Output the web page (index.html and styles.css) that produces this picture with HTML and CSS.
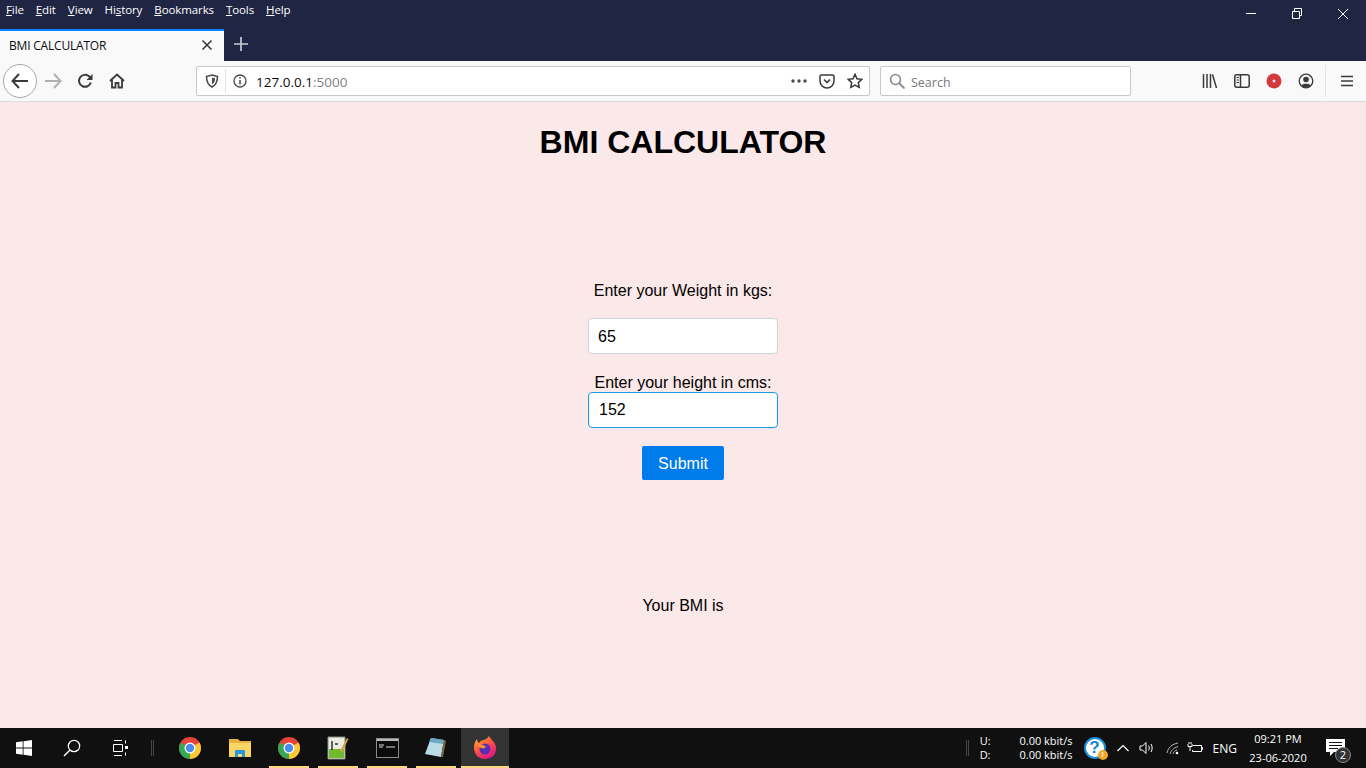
FILE: index.html
```html
<!DOCTYPE html>
<html lang="en">

<head>
    <meta charset="UTF-8">
    <meta name="viewport" content="width=device-width, initial-scale=1.0">
    <title>BMI CALCULATOR</title>
    <link rel="stylesheet" href="styles.css">
</head>

<body>

    <!-- Browser title bar -->
    <div class="titlebar">
        <div class="menubar">
            <div class="menu-items">
                <span><u>F</u>ile</span>
                <span><u>E</u>dit</span>
                <span><u>V</u>iew</span>
                <span>Hi<u>s</u>tory</span>
                <span><u>B</u>ookmarks</span>
                <span><u>T</u>ools</span>
                <span><u>H</u>elp</span>
            </div>
            <div class="window-buttons">
                <svg width="46" height="28" viewBox="0 0 46 28"><path d="M18 13.5h10" stroke="#fff" fill="none"/></svg>
                <svg width="46" height="28" viewBox="0 0 46 28"><path d="M18.5 11.5h7v7h-7zM20.500 11v-2.500h7v7h-2" stroke="#fff" fill="none"/></svg>
                <svg width="46" height="28" viewBox="0 0 46 28"><path d="M18 9l10 10M28 9l-10 10" stroke="#fff" fill="none"/></svg>
            </div>
        </div>
        <div class="tabstrip">
            <div class="tab">
                <span class="tab-title">BMI CALCULATOR</span>
                <svg width="12" height="12" viewBox="0 0 12 12"><path d="M1.500 1.500l9 9M10.500 1.500l-9 9" stroke="#333" stroke-width="1.500" fill="none"/></svg>
            </div>
            <svg class="new-tab" width="14" height="14" viewBox="0 0 14 14"><path d="M7 0v14M0 7h14" stroke="#c9cbd3" stroke-width="1.700" fill="none"/></svg>
        </div>
    </div>

    <!-- Navigation toolbar -->
    <div class="toolbar">
        <div class="back-btn">
            <svg width="18" height="16" viewBox="0 0 18 16"><path d="M8 1L1.500 8 8 15M2 8h15" stroke="#3a3a3c" stroke-width="2" fill="none"/></svg>
        </div>
        <svg class="nav-icon" width="18" height="16" viewBox="0 0 18 16"><path d="M10 1l6.500 7-6.500 7M16 8H1" stroke="#b1b1b3" stroke-width="2" fill="none"/></svg>
        <svg class="nav-icon" width="16" height="16" viewBox="0 0 16 16"><path d="M13.800 9.500A6 6 0 1 1 12 3.300L14 5" stroke="#3a3a3c" stroke-width="2" fill="none"/><path d="M15.500 1v6h-6z" fill="#3a3a3c"/></svg>
        <svg class="nav-icon nav-home" width="16" height="16" viewBox="0 0 16 16"><path d="M1 8l7-6.500L15 8M3 7v7.500h3.500V10h3v4.500H13V7" stroke="#3a3a3c" stroke-width="1.800" fill="none"/></svg>

        <div class="urlbar">
            <svg class="shield" width="14" height="14" viewBox="0 0 14 14"><path d="M7 1l5.500 1.500c0 5-1.500 8.500-5.500 10.500C3 11 1.500 7.500 1.500 2.500z" stroke="#4a4a4f" stroke-width="1.600" fill="none"/><path d="M7 3.500l3 .8c0 3-.8 4.700-3 6z" fill="#4a4a4f"/></svg>
            <span class="url-sep"></span>
            <svg class="info" width="14" height="14" viewBox="0 0 14 14"><circle cx="7" cy="7" r="6" stroke="#4a4a4f" stroke-width="1.300" fill="none"/><path d="M7 6v4.500M7 3.300v1.500" stroke="#4a4a4f" stroke-width="1.500" fill="none"/></svg>
            <span class="url-text">127.0.0.1<span class="url-port">:5000</span></span>
            <svg width="16" height="4" viewBox="0 0 16 4"><circle cx="2" cy="2" r="1.700" fill="#4a4a4f"/><circle cx="8" cy="2" r="1.700" fill="#4a4a4f"/><circle cx="14" cy="2" r="1.700" fill="#4a4a4f"/></svg>
            <svg class="pocket" width="16" height="15" viewBox="0 0 16 15"><path d="M2.500 1h11A1.500 1.500 0 0 1 15 2.500V7a7 7 0 0 1-14 0V2.500A1.500 1.500 0 0 1 2.500 1z" stroke="#3a3a3c" stroke-width="1.500" fill="none"/><path d="M5 5.500L8 8.500l3-3" stroke="#3a3a3c" stroke-width="1.600" fill="none"/></svg>
            <svg class="star" width="16" height="16" viewBox="0 0 16 16"><path d="M8 1.300l2 4.400 4.800.6-3.500 3.300.9 4.800L8 12l-4.200 2.400.9-4.800L1.200 6.300 6 5.700z" stroke="#3a3a3c" stroke-width="1.500" fill="none"/></svg>
        </div>

        <div class="searchbar">
            <svg width="16" height="16" viewBox="0 0 16 16"><circle cx="6.500" cy="6.500" r="5" stroke="#8a8a8e" stroke-width="1.600" fill="none"/><path d="M10 10l5.500 5.500" stroke="#8a8a8e" stroke-width="1.800" fill="none"/></svg>
            <span class="search-text">Search</span>
        </div>

        <div class="toolbar-right">
            <svg width="16" height="14" viewBox="0 0 16 14"><path d="M1.500 0v14M5 0v14M8.500 0v14M10.500 .5l4 13.500" stroke="#3a3a3c" stroke-width="1.500" fill="none"/></svg>
            <svg width="16" height="14" viewBox="0 0 16 14"><rect x=".8" y=".8" width="14.400" height="12.400" rx="2" stroke="#3a3a3c" stroke-width="1.500" fill="none"/><path d="M6.500 1v12" stroke="#3a3a3c" stroke-width="1.500"/><path d="M2.500 3.500h2.500M2.500 6h2.500M2.500 8.500h2.500" stroke="#3a3a3c"/></svg>
            <svg width="16" height="16" viewBox="0 0 16 16"><circle cx="8" cy="8" r="7.500" fill="#d23a3e"/><circle cx="8" cy="8" r="1.500" fill="#f7dcdc"/></svg>
            <svg width="16" height="16" viewBox="0 0 16 16"><circle cx="8" cy="8" r="6.800" stroke="#3a3a3c" stroke-width="1.300" fill="none"/><circle cx="8" cy="6.500" r="2.800" fill="#3a3a3c"/><path d="M3.200 12.500c1-2.500 8.600-2.500 9.600 0A6.500 6.500 0 0 1 3.200 12.500z" fill="#3a3a3c"/></svg>
            <span class="toolbar-sep"></span>
            <svg width="12" height="12" viewBox="0 0 12 12"><path d="M0 1.500h12M0 6h12M0 10.500h12" stroke="#3a3a3c" stroke-width="1.600" fill="none"/></svg>
        </div>
    </div>

    <!-- Page content -->
    <main class="page">
        <h1>BMI CALCULATOR</h1>
        <form class="bmi-form">
            <label class="label-weight" for="weight">Enter your Weight in kgs:</label>
            <input class="field field-weight" type="text" id="weight" value="65">
            <label class="label-height" for="height">Enter your height in cms:</label>
            <input class="field field-focus" type="text" id="height" value="152">
            <button class="submit-btn" type="button">Submit</button>
        </form>
        <p class="result">Your BMI is</p>
    </main>

    <!-- Windows taskbar -->
    <div class="taskbar">
        <div class="task-item">
            <svg width="16" height="16" viewBox="0 0 16 16"><path d="M0 2.200l6.700-.9v6.300H0zM7.500 1.200L16 0v7.600H7.500zM0 8.400h6.700v6.300L0 13.800zM7.500 8.400H16V16l-8.500-1.200z" fill="#fff"/></svg>
        </div>
        <div class="task-item">
            <svg width="18" height="18" viewBox="0 0 18 18"><circle cx="11" cy="7" r="5.700" stroke="#fff" stroke-width="1.200" fill="none"/><path d="M7 11l-6 6" stroke="#fff" stroke-width="1.500" fill="none"/></svg>
        </div>
        <div class="task-item">
            <svg width="16" height="16" viewBox="0 0 16 16"><path d="M2 .5h8M2 15.500h8M1.500 4.500h9v7h-9z" stroke="#fff" fill="none"/><path d="M13.500 .5v3M13.500 12.500v3" stroke="#fff" fill="none"/><rect x="13" y="6" width="3" height="3" fill="#fff"/></svg>
        </div>
        <span class="task-sep"></span>
        <div class="task-item chrome-first">
            <svg width="24" height="24" viewBox="0 0 24 24"><use href="#chrome"/></svg>
        </div>
        <div class="task-item explorer">
            <svg width="24" height="20" viewBox="0 0 24 20"><path d="M1 1h9l2 2h11v16H1z" fill="#e8b33c"/><path d="M1 5h22v14H1z" fill="#fbd667"/><path d="M7 12h10v7h-3v-3h-4v3H7z" fill="#2a9ae0"/></svg>
        </div>
        <div class="task-item running">
            <svg width="24" height="24" viewBox="0 0 24 24">
                <defs>
                    <g id="chrome">
                        <circle cx="12" cy="12" r="11" fill="#e8433a"/>
                        <path d="M12 12L2.500 6.500A11 11 0 0 0 12 23z" fill="#34a853"/>
                        <path d="M12 12l9.500-5.500A11 11 0 0 1 12 23z" fill="#fbc934"/>
                        <circle cx="12" cy="12" r="5.500" fill="#fff"/>
                        <circle cx="12" cy="12" r="4.200" fill="#4a8cf0"/>
                    </g>
                </defs>
                <use href="#chrome"/>
            </svg>
        </div>
        <div class="task-item running">
            <svg width="22" height="24" viewBox="0 0 22 24"><path d="M1 1h17v22H1z" fill="#e9ede4" stroke="#8a8a80"/><path d="M2 13h15v9H2z" fill="#6fbb2d"/><path d="M5 5v9M8 8h3" stroke="#333" stroke-width="1.500" fill="none"/><path d="M13 15L20 2l1.500 1L15 16z" fill="#d9a23a"/></svg>
        </div>
        <div class="task-item running">
            <svg width="23" height="20" viewBox="0 0 23 20"><rect x=".5" y=".5" width="22" height="19" fill="#0b0b0b" stroke="#8d8d8d"/><path d="M1 1h21v2H1z" fill="#b9b9b9"/><path d="M3 7h5M3 9h4M10 9h9" stroke="#ddd" fill="none"/></svg>
        </div>
        <div class="task-item running">
            <svg width="24" height="22" viewBox="0 0 24 22"><path d="M7 1l13 2-3 17-16-3z" fill="#b9dbe6"/><path d="M7 1l13 2-1 4-14-2z" fill="#6aa9c0"/><path d="M17 20l3-17 2 1-3 16z" fill="#78683e"/></svg>
        </div>
        <div class="task-item active">
            <svg width="24" height="24" viewBox="0 0 24 24">
                <defs>
                    <linearGradient id="fox" x1="0" y1="0" x2="0.600" y2="1">
                        <stop offset="0" stop-color="#ffbd2e"/>
                        <stop offset="0.500" stop-color="#ff5a3c"/>
                        <stop offset="1" stop-color="#e31587"/>
                    </linearGradient>
                </defs>
                <path d="M16 0c1 3 6 5 7 11 1 7-4 12-11 12S1 18 1 11c0-3 1-6 3-8 0 2 1 3 2 4 1-2 3-3 5-3 2-1 4-2 5-4z" fill="url(#fox)"/>
                <circle cx="12" cy="13" r="5.500" fill="#5b2fb5"/>
                <path d="M5 9c3-1 6 0 8 2-2 2-6 2-8-2z" fill="#ff9a2e"/>
            </svg>
        </div>

        <div class="tray">
            <span class="task-sep tray-sep"></span>
            <div class="net-labels"><span>U:</span><span>D:</span></div>
            <div class="net-values"><span>0.00 kbit/s</span><span>0.00 kbit/s</span></div>
            <div class="help-badge">?<span class="help-dot">!</span></div>
            <svg class="chevron" width="12" height="8" viewBox="0 0 12 8"><path d="M.5 7L6 1.500 11.500 7" stroke="#fff" stroke-width="1.200" fill="none"/></svg>
            <svg class="speaker" width="16" height="14" viewBox="0 0 16 14"><path d="M1 5h2.500L7 1.500v11L3.500 9H1zM9.500 4.500c1 1.500 1 3.500 0 5M12 3c1.500 2.500 1.500 5.500 0 8" stroke="#fff" fill="none"/></svg>
            <svg class="wifi" width="15" height="13" viewBox="0 0 15 13"><path d="M1 11c1-5 5-9 11-10M4 12c1-3 3-6 8-7.500M7 12c.5-2 2-3.500 4-4" stroke="#bbb" fill="none"/><circle cx="11" cy="11" r="1.300" fill="#fff"/></svg>
            <svg class="battery" width="16" height="12" viewBox="0 0 16 12"><path d="M5.500 3.500h9v6h-9v-1.500M14.500 5.500h1v2h-1" stroke="#fff" fill="none"/><path d="M1 2v2.500h4V2M2 0v2M4 0v2M3 4.500V9" stroke="#fff" fill="none"/></svg>
            <span class="lang">ENG</span>
            <div class="clock"><span>09:21 PM</span><span>23-06-2020</span></div>
            <div class="notify">
                <svg width="20" height="18" viewBox="0 0 20 18"><path d="M0 0h19v13H8l-4 4v-4H0z" fill="#fff"/><path d="M3 3.500h13M3 6.500h13M3 9.500h9" stroke="#111" fill="none"/></svg>
                <span class="notify-count">2</span>
            </div>
        </div>
    </div>

</body>

</html>
```

FILE: styles.css
```css
* {
    box-sizing: border-box;
}

body {
    margin: 0;
    height: 768px;
    overflow: hidden;
    display: flex;
    flex-direction: column;
    font-family: "Liberation Sans", Arial, sans-serif;
    background: #fbe8e8;
}

svg {
    flex: none;
    display: block;
}

.titlebar {
    height: 61px;
    background: #1f2543;
    flex: none;
}

.menubar {
    height: 29px;
    display: flex;
    justify-content: space-between;
}

.menu-items {
    display: flex;
    gap: 12px;
    padding: 1px 0 0 6px;
    font-family: "Open Sans", sans-serif;
    font-size: 11.5px;
    letter-spacing: -0.1px;
    line-height: 17px;
    color: #fff;
}

.window-buttons {
    display: flex;
}

.tabstrip {
    height: 32px;
    display: flex;
    align-items: center;
}

.tab {
    width: 224px;
    height: 32px;
    background: #f9f9fa;
    border-top: 2px solid #0a84ff;
    display: flex;
    align-items: center;
    justify-content: space-between;
    padding: 0 11px 2px 9px;
}

.tab-title {
    font-family: "Open Sans", sans-serif;
    font-size: 12px;
    letter-spacing: -0.2px;
    color: #0c0c0d;
}

.new-tab {
    margin: 0 0 2px 10px;
}

.toolbar {
    height: 41px;
    flex: none;
    background: #f9f9fa;
    border-bottom: 1px solid #ddd;
    display: flex;
    align-items: center;
    padding-left: 3px;
}

.back-btn {
    width: 34px;
    height: 34px;
    border: 1px solid #a8a8aa;
    border-radius: 50%;
    background: #fff;
    display: flex;
    align-items: center;
    justify-content: center;
}

.nav-icon {
    margin-left: 7px;
}

.nav-icon + .nav-icon {
    margin-left: 15px;
}

.nav-icon + .nav-home {
    margin-left: 16px;
}

.urlbar {
    width: 674px;
    height: 30px;
    margin-left: 71px;
    background: #fff;
    border: 1px solid #c8c8ca;
    border-radius: 2px;
    display: flex;
    align-items: center;
    padding: 0 6px 0 8px;
}

.url-sep {
    width: 1px;
    height: 24px;
    background: #e3e3e5;
    margin: 0 7px 0 6px;
}

.url-text {
    flex: 1;
    margin-left: 9px;
    padding-top: 1px;
    font-family: "Open Sans", sans-serif;
    font-size: 13.5px;
    color: #0c0c0d;
}

.url-port {
    color: #808084;
}

.pocket {
    margin-left: 12px;
}

.star {
    margin-left: 12px;
}

.searchbar {
    width: 251px;
    height: 30px;
    margin-left: 10px;
    background: #fff;
    border: 1px solid #c8c8ca;
    border-radius: 2px;
    display: flex;
    align-items: center;
    gap: 6px;
    padding-left: 8px;
    font-family: "Open Sans", sans-serif;
    font-size: 12.5px;
    color: #77777b;
}

.search-text {
    padding-top: 2px;
}

.toolbar-right {
    flex: 1;
    display: flex;
    align-items: center;
    gap: 16px;
    padding-left: 71px;
}

.toolbar-sep {
    width: 1px;
    height: 32px;
    background: #e3e3e5;
    margin: 0 -1px 0 -5px;
}

.page {
    flex: 1;
    text-align: center;
    color: #000;
}

h1 {
    margin: 0;
    padding-top: 21px;
    font-size: 32px;
    line-height: 38px;
}

.bmi-form {
    display: flex;
    flex-direction: column;
    align-items: center;
    margin-top: 121px;
}

.bmi-form label {
    font-size: 16px;
    line-height: 18px;
}

.label-weight {
    margin-bottom: 18px;
}

.label-height {
    margin-top: 20px;
}

.field {
    width: 190px;
    height: 36px;
    padding: 0 9px;
    font-family: "Liberation Sans", Arial, sans-serif;
    font-size: 16px;
    color: #000;
    background: #fff;
    border: 1px solid #ced4da;
    border-radius: 4px;
}

.field-weight {
    padding-top: 2px;
}

.field-focus {
    padding: 0 10px;
    border-color: #1a9be8;
}

.submit-btn {
    width: 82px;
    height: 34px;
    margin-top: 18px;
    padding: 2px 0 0;
    font-family: "Liberation Sans", Arial, sans-serif;
    font-size: 16px;
    color: #fff;
    background: #007bec;
    border: 0;
    border-radius: 2px;
}

.result {
    margin: 117px 0 0;
    font-size: 16px;
    line-height: 18px;
}

.taskbar {
    height: 40px;
    flex: none;
    background: #101010;
    display: flex;
    align-items: center;
    color: #fff;
    font-family: "Open Sans", sans-serif;
    font-size: 11px;
}

.task-item {
    width: 48px;
    height: 40px;
    flex: none;
    display: flex;
    align-items: center;
    justify-content: center;
}

.task-sep {
    width: 3px;
    height: 16px;
    margin: 0 5px 0 7px;
    border-left: 1px solid #444;
    border-right: 1px solid #444;
}

.chrome-first {
    margin-left: 7px;
}

.explorer {
    margin-left: 2px;
}

.running {
    border-bottom: 2px solid #ffd77f;
    padding-top: 1px;
    width: 40px;
    margin: 0 4px 0 5px;
}

.active {
    margin-left: 1px;
    background: #333;
    border-bottom: 2px solid #ffd77f;
    padding-top: 1px;
}

.tray {
    flex: 1;
    display: flex;
    align-items: center;
    justify-content: flex-end;
}

.tray-sep {
    margin: 0 11px 0 0;
}

.net-labels,
.net-values,
.clock {
    display: flex;
    flex-direction: column;
    line-height: 14px;
}

.net-values {
    width: 60px;
    margin-left: 22px;
    margin-right: 11px;
    text-align: right;
}

.help-badge {
    position: relative;
    width: 22px;
    height: 22px;
    border-radius: 50%;
    background: #fff;
    border: 2px solid #1b8fd8;
    color: #1487ce;
    font: bold 17px/18px "Liberation Sans", Arial, sans-serif;
    text-align: center;
}

.help-dot {
    position: absolute;
    right: -4px;
    bottom: -3px;
    width: 10px;
    height: 10px;
    border-radius: 50%;
    background: #f5a623;
    color: #fff;
    font-size: 8px;
    line-height: 10px;
}

.chevron {
    margin-left: 11px;
}

.speaker {
    margin-left: 10px;
}

.wifi {
    margin-left: 11px;
}

.battery {
    margin-left: 6px;
}

.lang {
    margin-left: 10px;
    font-size: 12px;
}

.clock {
    width: 60px;
    margin-left: 11px;
    text-align: center;
    font-size: 11px;
    line-height: 19px;
}

.notify {
    position: relative;
    width: 51px;
    margin-left: 7px;
    height: 40px;
    display: flex;
    align-items: center;
    padding-left: 11px;
}

.notify-count {
    position: absolute;
    left: 20px;
    top: 19px;
    width: 16px;
    height: 16px;
    border-radius: 50%;
    background: #333;
    border: 1px solid #888;
    font-size: 11px;
    line-height: 14px;
    text-align: center;
}
```
